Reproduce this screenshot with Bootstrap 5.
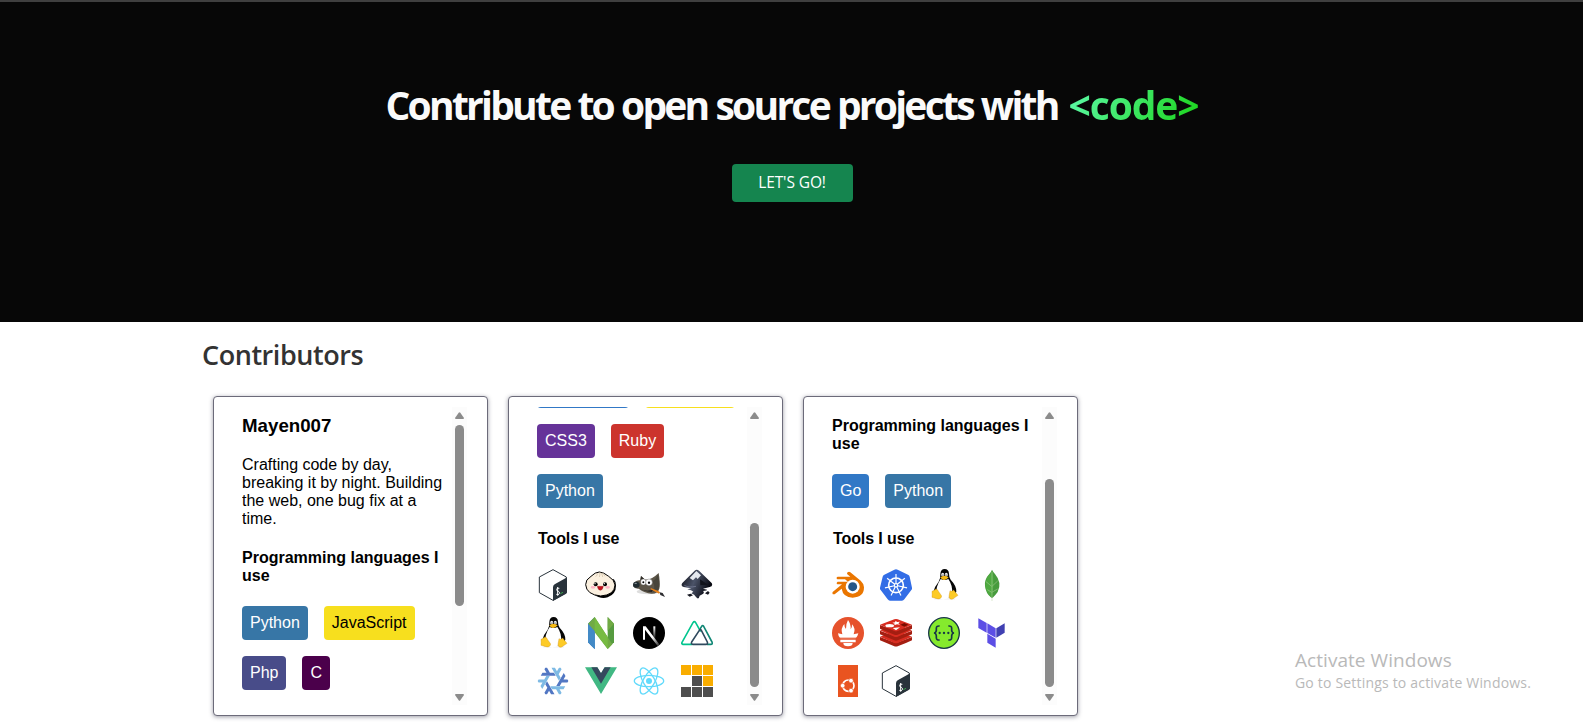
<!DOCTYPE html>
<html lang="en">
<head>
<meta charset="utf-8">
<meta name="viewport" content="width=device-width, initial-scale=1">
<title>Contributors</title>
<link href="https://cdn.jsdelivr.net/npm/bootstrap@5.3.0/dist/css/bootstrap.min.css" rel="stylesheet">
<style>
body{font-family:"Open Sans","Noto Sans",sans-serif;background:#fff;height:726px;overflow:hidden}
.hero{height:322px;background:#070707;border-top:2px solid #3f3f3f;padding:75px 0 0 1px}
.hero h1{font-size:39px;line-height:56px;font-weight:700;letter-spacing:-2.75px;word-spacing:.6px;color:#fafafa;white-space:nowrap;margin:0 0 31px}
.code-word{letter-spacing:-1.1px;margin-left:3px;background:linear-gradient(120deg,#5dfaa9 5%,#1cd41c 95%);-webkit-background-clip:text;background-clip:text;color:transparent}
.btn-go{width:121px;height:38px;padding:0;border:0;border-radius:4px;background:#15854f;color:#fff;font-size:15.500px;line-height:37px;letter-spacing:-.1px}
.btn-go:hover{background:#116e41;color:#fff}
.wrap{padding-left:203px}
.wrap h2{font-size:27px;line-height:36px;font-weight:600;letter-spacing:-.45px;color:#333;margin:15px 0 23px -1px}
.people{gap:20px;padding-left:10px}
.person{width:275px;height:320px;border:1px solid #6c6b7a;border-radius:4px;box-shadow:0 1px 4px rgba(60,60,80,.5);padding:10px 20px 10px 28px;background:#fff;font:16px/18px "Liberation Sans",Arial,sans-serif;color:#000}
.pane{width:210px;height:298px;overflow:hidden}
.pane h3{font-size:18.72px;line-height:21px;font-weight:700;margin:8px 0 20px}
.pane p{margin:0 0 21px;width:205px}
.pane h4{font-size:16px;line-height:18px;font-weight:700;margin:0 0 21px}
.pane .tools-title{margin-top:22px;padding-left:1px;letter-spacing:-.1px}
.chip{height:34px;line-height:34px;padding:0 8px;border-radius:4px;color:#fff;white-space:nowrap}
.chips{gap:16px}
.c-python{background:#3776a6}.c-js{background:#f7df1e;color:#000}.c-php{background:#484c89}.c-c{background:#4b004b}
.c-css{background:#663399}.c-ruby{background:#cc342d}.c-blue{background:#3178c6}
.sliver{height:1px;overflow:hidden;margin-bottom:16px}
.tools{display:grid;grid-template-columns:repeat(4,32px);gap:16px}
.tools svg{width:32px;height:32px;display:block}
.track{width:15px;height:298px;background:#fcfcfc;padding-top:5px}
.track svg{display:block;width:9px;height:7px;fill:#8b8b8b}
.thumb{width:9px;border-radius:5px;background:#8b8b8b}
.notice{position:absolute;left:1295px;top:646px;color:#b9b9b9;white-space:nowrap}
.notice div{font-size:19px;line-height:28px;letter-spacing:.05px}
.notice span{display:block;font-size:14px;line-height:18px;letter-spacing:.19px}
</style>
</head>
<body>
<svg class="d-none">
<symbol id="bash" viewBox="0 0 96 96"><path d="M48 2 88 24V71L48 94 7 71V24Z" fill="#fff" stroke="#29333b" stroke-width="3" stroke-linejoin="round"/><path d="M48 55q0-6 5-9L88 26q2 0 2 3V69q0 4-4 6L48 96Z" fill="#29333b"/><path d="M67 58q-8-3-8 4 0 4 5 5 5 2 3 7-3 6-9 2M62 54v26" fill="none" stroke="#fff" stroke-width="3"/><path d="m70 74 8-4" stroke="#37a24a" stroke-width="3"/></symbol>
<symbol id="tux" viewBox="0 0 96 96"><path d="M22 88q20 5 54 0l6 3H18Z" fill="#ddd"/><path d="M37 15Q38 0 50 0q12 0 13 14 0 12 5 18 18 19 17 36l-10 17H24l-8-16q4-17 16-31 6-10 5-23Z" fill="#060606"/><path d="M38 30q11 6 23 0 14 20 11 44-7 15-24 15-17 0-23-14-2-22 13-45Z" fill="#fff"/><ellipse cx="44" cy="17" rx="4.500" ry="5.500" fill="#eee"/><ellipse cx="55" cy="17" rx="4.500" ry="5.500" fill="#eee"/><circle cx="45" cy="18" r="1.800"/><circle cx="54" cy="18" r="1.800"/><path d="M37 25q12-9 25 0-9 10-15 8-7-2-10-8Z" fill="#f5b914"/><path d="M12 67q6-1 10-6 7-2 10 7l9 13q-2 11-14 8l-15-4q1-8 0-18ZM66 65q4 5 11-2 4 5 7 9l6 7-16 11q-10 3-11-8Z" fill="#fdcb27" stroke="#c98708"/></symbol>
<symbol id="lambda" viewBox="-48 -48 96 96"><path d="M-18.700 1 4.700 41.500-6.100 41.600-12.300 30.700-18.600 41.600H-23.900L-26.700 36.800-17.700 21.400-24.100 10.400Z"/></symbol>
</svg>

<header class="hero text-center">
<h1>Contribute to open source projects with <span class="code-word">&lt;code&gt;</span></h1>
<a class="btn btn-go" href="#people">LET'S GO!</a>
</header>

<main class="wrap" id="people">
<h2>Contributors</h2>
<div class="people d-flex">

<section class="person d-flex">
<div class="pane">
<h3>Mayen007</h3>
<p>Crafting code by day, breaking it by night. Building the web, one bug fix at a time.</p>
<h4>Programming languages I use</h4>
<div class="chips d-flex flex-wrap"><span class="chip c-python">Python</span><span class="chip c-js">JavaScript</span><span class="chip c-php">Php</span><span class="chip c-c">C</span></div>
</div>
<div class="track d-flex flex-column align-items-center"><svg viewBox="0 0 9 7"><path d="M3.700.8q.8-1 1.600 0L9 6q0 1-1 1H1Q0 7 0 6Z"/></svg><div class="thumb" style="height:181px;margin-top:6px"></div><svg class="mt-auto mb-1" viewBox="0 0 9 7"><path d="M3.700 6.200q.8 1 1.600 0L9 1q0-1-1-1H1Q0 0 0 1Z"/></svg></div>
</section>

<section class="person d-flex">
<div class="pane">
<div class="sliver d-flex align-items-end chips"><span class="chip c-blue flex-shrink-0" style="width:92px"></span><span class="chip c-js flex-shrink-0" style="width:90px"></span></div>
<div class="chips d-flex flex-wrap"><span class="chip c-css">CSS3</span><span class="chip c-ruby me-4">Ruby</span><span class="chip c-python">Python</span></div>
<h4 class="tools-title">Tools I use</h4>
<div class="tools">
<svg><use href="#bash"/></svg>
<svg viewBox="0 0 96 96"><path d="M24 76q24 16 44 9 25-10 25-35 0-13-7-20Z" fill="#000"/><path d="M2 47Q1 32 18 22 31 9 43 9q12 0 28 13 18 11 19 26-1 30-43 33Q4 77 2 47Z" fill="#fbf0df" stroke="#000" stroke-width="3"/><path d="M32 23q5-4 6-10M43 24q3-6 1-13M53 24q0-7-6-13M60 22q-2-5-8-10" fill="none" stroke="#cbbba0" stroke-width="2"/><ellipse cx="24" cy="55" rx="7" ry="4" fill="#feb4c4"/><ellipse cx="68" cy="55" rx="7" ry="4" fill="#feb4c4"/><circle cx="32" cy="46" r="6"/><circle cx="60" cy="46" r="6"/><circle cx="30" cy="44" r="2" fill="#fff"/><circle cx="58" cy="44" r="2" fill="#fff"/><path d="M37 52h18q-2 12-9 12t-9-12Z" fill="#c6101b" stroke="#801018"/></svg>
<svg viewBox="0 0 96 96"><ellipse cx="45" cy="68" rx="34" ry="8" fill="#ddd"/><path d="M5 39q9-7 17-5l2-13 10 10q18 5 43-19 5 27 2 47-5 16-24 15-19-1-38-15-12 1-17-8Z" fill="#5c5548"/><path d="m24 21-2 13 13-3Z" fill="#302d28"/><path d="M74 17q-5 15-18 20 14 14 4 31 17-2 19-14 2-16-5-37Z" fill="#48453b"/><ellipse cx="31" cy="39" rx="8" ry="9" fill="#fff" stroke="#555"/><ellipse cx="48" cy="40" rx="10" ry="10" fill="#fff" stroke="#555"/><circle cx="31" cy="40" r="3"/><circle cx="48" cy="41" r="3.500"/><ellipse cx="10" cy="47" rx="10" ry="9" fill="#202b30"/><ellipse cx="8" cy="43" rx="4" ry="2" fill="#899397"/><path d="M18 57q20 14 45 4l-7 8Q33 67 18 57Z" fill="#222"/><path d="m53 57 23 9 5 4-3 4-25-13Z" fill="#e88018"/><path d="m80 70 9 2 7 12-14-6Z" fill="#2e2e31"/></svg>
<svg viewBox="0 0 96 96"><defs><linearGradient id="ink" x1="0" x2="1" y2=".4"><stop stop-color="#090a10"/><stop offset=".5" stop-color="#4b5368"/><stop offset="1" stop-color="#070810"/></linearGradient></defs><path d="M41 5q6-6 13 0l38 37q5 9-6 12l-20 5 12 3q1 3-12 4 6 6-2 10l-8 4q-3 14-11 4-4-7-14-11l6-5q-5-5-18-7l12-3-23-4q-10-3-4-12Z" fill="url(#ink)"/><path d="m46 6 14 13-10 11-5-5-9 9-10-7Z" fill="#e4e8ef"/><path d="m57 31 24 16-23 2Z" fill="#11131b"/><path d="M10 49q14 8 35 3" fill="none" stroke="#8087a0" stroke-width="2"/><path d="m18 77 11-3 7 5-10 4ZM72 73l9-7 5 5-5 6Z" fill="#151720"/></svg>
<svg><use href="#tux"/></svg>
<svg viewBox="0 0 96 96"><path d="M9 20 29 0v96L9 76Z" fill="#3378bd"/><path d="M9 20 29 42v54L9 76Z" fill="#438ac6"/><path d="m68 0 19 20v56L68 96Z" fill="#569b40"/><path d="m87 20-19 21V0ZM29 0l53 82-14 14L9 20Z" fill="#71aa44"/><path d="m29 42 39 54V60L29 0Z" fill="#77bb42"/><path d="M9 20 29 42v54L9 76Z" fill="#438ac6"/></svg>
<svg viewBox="0 0 96 96"><defs><linearGradient id="nx" x2="1" y2="1"><stop offset=".55" stop-color="#fff"/><stop offset="1" stop-color="#fff" stop-opacity=".1"/></linearGradient><linearGradient id="ny" x2="0" y2="1"><stop stop-color="#fff"/><stop offset="1" stop-color="#fff" stop-opacity="0"/></linearGradient></defs><circle cx="48" cy="48" r="48"/><path d="M30 28h8l42 55-6 4L36 38v30h-6Z" fill="url(#nx)"/><path d="M61 28h6v39h-6Z" fill="url(#ny)"/></svg>
<svg viewBox="0 0 96 96" fill="none" stroke-width="4.800" stroke-linejoin="round"><path d="M34 82H5q-4-2-2-6L36 17q4-6 8 0l15 27" stroke="#00c58e"/><path d="m57 36 5-8q3-4 6 0l25 47q3 7-4 7H78" stroke="#108775"/><path d="m32 75 23-35q3-4 6 0l18 35q2 7-4 7H36q-7-1-4-7Z" stroke="#2f495e"/></svg>
<svg viewBox="-50 -50 100 100"><g fill="#5277c3"><use href="#lambda" x="-48" y="-48" width="96" height="96"/><use href="#lambda" x="-48" y="-48" width="96" height="96" transform="rotate(120)"/><use href="#lambda" x="-48" y="-48" width="96" height="96" transform="rotate(240)"/></g><g fill="#7ebae4"><use href="#lambda" x="-48" y="-48" width="96" height="96" transform="rotate(60)"/><use href="#lambda" x="-48" y="-48" width="96" height="96" transform="rotate(180)"/><use href="#lambda" x="-48" y="-48" width="96" height="96" transform="rotate(300)"/></g></svg>
<svg viewBox="0 0 96 96"><path d="M0 7h37l11 18L59 7h37L48 87Z" fill="#41b883"/><path d="M19 7h18l11 18L59 7h18L48 56Z" fill="#35495e"/></svg>
<svg viewBox="0 0 96 96" fill="none" stroke="#61dafb" stroke-width="4"><circle cx="48" cy="48" r="9" fill="#61dafb" stroke="none"/><ellipse cx="48" cy="48" rx="44" ry="17"/><ellipse cx="48" cy="48" rx="44" ry="17" transform="rotate(60 48 48)"/><ellipse cx="48" cy="48" rx="44" ry="17" transform="rotate(120 48 48)"/></svg>
<svg viewBox="0 0 96 96"><path d="M0 0h30v30H0ZM33 0h30v30H33ZM66 0h30v30H66ZM66 33h30v30H66Z" fill="#f9ad00"/><path d="M33 33h30v30H33ZM0 66h30v30H0ZM33 66h30v30H33ZM66 66h30v30H66Z" fill="#4e4e4e"/></svg>
</div>
</div>
<div class="track d-flex flex-column align-items-center"><svg viewBox="0 0 9 7"><path d="M3.700.8q.8-1 1.600 0L9 6q0 1-1 1H1Q0 7 0 6Z"/></svg><div class="thumb" style="height:164px;margin-top:104px"></div><svg class="mt-auto mb-1" viewBox="0 0 9 7"><path d="M3.700 6.200q.8 1 1.600 0L9 1q0-1-1-1H1Q0 0 0 1Z"/></svg></div>
</section>

<section class="person d-flex">
<div class="pane">
<h4 style="margin-top:10px">Programming languages I use</h4>
<div class="chips d-flex"><span class="chip c-blue">Go</span><span class="chip c-python">Python</span></div>
<h4 class="tools-title">Tools I use</h4>
<div class="tools">
<svg viewBox="0 0 96 96"><path d="M47 10q4-3 8 0l31 25q10 9 10 20 0 30-34 31-29-1-33-27L8 76q-9 1-6-7l28-23H17q-6-3 0-8h31L39 31H16q-5-5 1-8h38L46 16q-2-3 1-6Z" fill="#ea7600"/><circle cx="62" cy="53" r="21" fill="#fff"/><circle cx="62" cy="53" r="13.500" fill="#265787"/></svg>
<svg viewBox="0 0 96 96"><path d="M48 1q3 0 5 1l31 15q4 2 5 6l7 33q1 4-2 7L73 91q-3 4-7 4H30q-4 0-7-4L2 63q-3-3-2-7l8-33q1-4 5-6L43 2q2-1 5-1Z" fill="#326de6"/><g stroke="#fff" stroke-width="3.500" fill="none"><circle cx="48" cy="49" r="22" stroke-width="5"/><circle cx="48" cy="49" r="5"/><path id="kr" d="M48 15v29"/><use href="#kr" transform="rotate(51.430 48 49)"/><use href="#kr" transform="rotate(102.860 48 49)"/><use href="#kr" transform="rotate(154.290 48 49)"/><use href="#kr" transform="rotate(205.710 48 49)"/><use href="#kr" transform="rotate(257.140 48 49)"/><use href="#kr" transform="rotate(308.570 48 49)"/></g></svg>
<svg><use href="#tux"/></svg>
<svg viewBox="0 0 96 96"><path d="M48 2q4 8 9 13 22 26 8 54-7 10-15 17H46Q29 73 27 50 25 31 40 15q5-5 8-13Z" fill="#479b3d"/><path d="M49 7q8 38-2 78Q30 70 28 50 28 29 41 15Z" fill="#4faa41"/><path d="M48 8v88M30 38l17 14M34 62l13 8M65 36 49 51M65 60l-16 9" fill="none" stroke="#b4d3a0" stroke-width="1.500"/></svg>
<svg viewBox="0 0 96 96"><circle cx="48" cy="48" r="48" fill="#e6522c"/><path d="M48 88q-14 0-14-10h28q0 10-14 10ZM25 68h46v8H25ZM25 64q-7-8-7-15l13 3q-6-18 6-31 0 11 5 15 0-17 6-27 9 12 8 28 5-5 4-15 12 12 5 30l14-3q-1 7-8 15Z" fill="#fff"/><path d="M24 63h48" stroke="#e6522c" stroke-width="2"/></svg>
<svg viewBox="0 0 96 96"><path d="M0 60l48 18 48-18v10q-18 9-43 18-5 2-12-1L0 70Z" fill="#a41e11"/><path d="M0 59 48 40l48 19-43 19q-5 2-10 0Z" fill="#d82c20"/><path d="M0 41l48 18 48-18v11Q75 61 53 70q-5 2-10 0L0 52Z" fill="#a41e11"/><path d="M0 40 48 23l48 17-43 19q-5 2-10 0Z" fill="#d82c20"/><path d="M0 24l48 18 48-18v11Q75 44 53 53q-5 2-10 0L0 35Z" fill="#a41e11"/><path d="M0 23 43 7q5-2 10 0l43 16-43 19q-5 2-10 0Z" fill="#d82c20"/><ellipse cx="29" cy="26" rx="13" ry="5" fill="#fff"/><path d="m47 11 4 4 9-1-5 5 5 4-9-1-8 3 1-5-7-3 8-1ZM38 33l22-2-12 9Z" fill="#fff"/><path d="m61 23 12-5 12 5-12 6Z" fill="#7a0c00"/></svg>
<svg viewBox="0 0 96 96"><circle cx="48" cy="48" r="46" fill="#85ea2d" stroke="#173647" stroke-width="4"/><path d="M35 27q-10-1-10 7 1 13-7 14 8 1 7 14 0 8 10 7M61 27q10-1 10 7-1 13 7 14-8 1-7 14 0 8-10 7" fill="none" stroke="#173647" stroke-width="5"/><g fill="#173647"><circle cx="35" cy="48" r="3.500"/><circle cx="48" cy="48" r="3.500"/><circle cx="61" cy="48" r="3.500"/></g></svg>
<svg viewBox="0 0 96 96"><path d="m7 4 25 14v29L7 33ZM34 19l25 15v28L34 48ZM34 50l25 15v27L34 77Z" fill="#5c4ee5"/><path d="m61 34 25-15v28L61 62Z" fill="#4040b2"/></svg>
<svg viewBox="0 0 96 96"><path d="M18 0h60v96H18Z" fill="#e95420"/><g fill="none" stroke="#fff" stroke-width="5"><circle cx="49" cy="62" r="17"/></g><g fill="#fff" stroke="#e95420" stroke-width="2"><circle cx="32" cy="62" r="7"/><circle cx="57" cy="47" r="7"/><circle cx="57" cy="77" r="7"/></g></svg>
<svg><use href="#bash"/></svg>
</div>
</div>
<div class="track d-flex flex-column align-items-center"><svg viewBox="0 0 9 7"><path d="M3.700.8q.8-1 1.600 0L9 6q0 1-1 1H1Q0 7 0 6Z"/></svg><div class="thumb" style="height:208px;margin-top:60px"></div><svg class="mt-auto mb-1" viewBox="0 0 9 7"><path d="M3.700 6.200q.8 1 1.600 0L9 1q0-1-1-1H1Q0 0 0 1Z"/></svg></div>
</section>
</div>
</main>
<aside class="notice"><div>Activate Windows</div><span>Go to Settings to activate Windows.</span></aside>
<script src="https://cdn.jsdelivr.net/npm/bootstrap@5.3.0/dist/js/bootstrap.bundle.min.js"></script>
</body>
</html>
